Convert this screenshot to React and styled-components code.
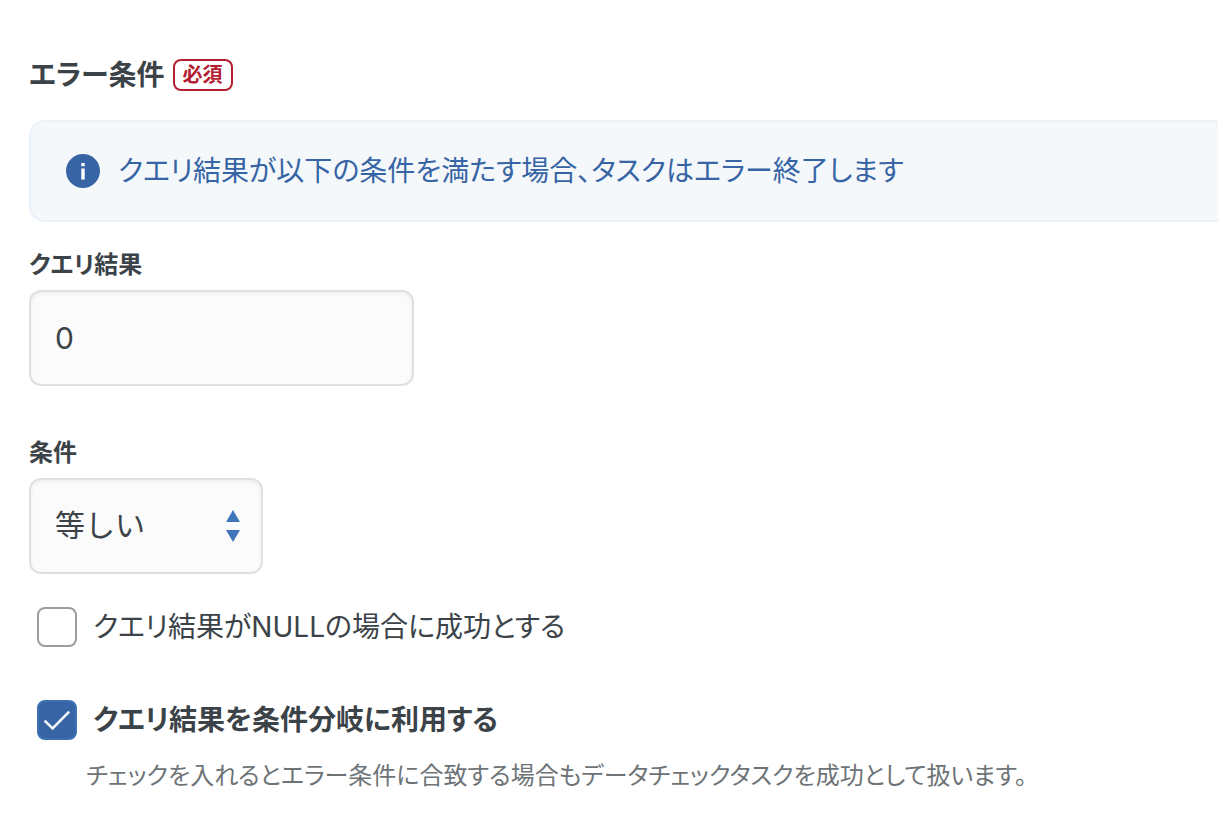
import React, { useState } from "react";
import styled, { createGlobalStyle } from "styled-components";

const GlobalStyle = createGlobalStyle`
  * {
    box-sizing: border-box;
  }
  body {
    margin: 0;
    background: #fff;
    color: #3b4348;
    font-family: Inter, "Noto Sans CJK JP", sans-serif;
    font-feature-settings: "palt";
  }
  input, select {
    font: inherit;
    color: inherit;
  }
`;

const Form = styled.form`
  padding: 57px 0 32px 29px;
`;

const Heading = styled.h2`
  display: flex;
  align-items: center;
  gap: 8px;
  margin: 0 0 27px;
  font-size: 28px;
  line-height: 36px;
`;

const Required = styled.span`
  height: 32px;
  padding: 0 8px;
  border: 2px solid #b4202f;
  border-radius: 8px;
  color: #b4202f;
  font-size: 20px;
  line-height: 28px;
`;

const Info = styled.div`
  display: flex;
  align-items: center;
  gap: 18px;
  height: 102px;
  margin-bottom: 25px;
  padding: 0 35px;
  border: 2px solid #ebf1f8;
  border-right: 0;
  border-radius: 16px 0 0 16px;
  background: #f4f8fb;
  color: #3664a4;
  font-size: 28px;
  line-height: 40px;
`;

const Field = styled.div`
  display: flex;
  flex-direction: column;
  align-items: flex-start;
  gap: 7px;
  margin-bottom: ${({ $gap }) => $gap};
`;

const Label = styled.label`
  font-size: 24px;
  font-weight: 700;
  line-height: 36px;
`;

const TextInput = styled.input`
  width: 385px;
  height: 96px;
  padding: 0 24px;
  border: 2px solid #e0e0e0;
  border-radius: 12px;
  background: #fbfbfb;
  box-shadow: inset 0 2px 4px #0000000d;
  font-size: 30px;
`;

const SelectBox = styled.div`
  position: relative;
  width: 234px;

  svg {
    position: absolute;
    top: 32px;
    right: 23px;
    pointer-events: none;
  }
`;

const Select = styled.select`
  width: 100%;
  height: 96px;
  padding: 0 24px 2px;
  border: 2px solid #e0e0e0;
  border-radius: 12px;
  background: #fbfbfb;
  box-shadow: inset 0 2px 4px #0000000d;
  font-size: 30px;
  font-feature-settings: normal;
  appearance: none;
`;

const CheckLabel = styled.label`
  display: flex;
  align-items: center;
  gap: 16px;
  margin-left: 8px;
  font-size: 28px;
  font-weight: ${({ $bold }) => ($bold ? 700 : 400)};
  line-height: 40px;
`;

const CheckBox = styled.span`
  display: grid;
  width: 40px;
  height: 40px;

  input, svg {
    grid-area: 1 / 1;
  }
  svg {
    pointer-events: none;
    visibility: hidden;
  }
  input:checked + svg {
    visibility: visible;
  }
`;

const CheckInput = styled.input`
  width: 40px;
  height: 40px;
  margin: 0;
  border: 2px solid #9a9ea1;
  border-radius: 8px;
  background: #fff;
  appearance: none;

  &:checked {
    border-color: #3e70b5;
    background: #3664a4;
  }
`;

const Options = styled.div`
  display: flex;
  flex-direction: column;
  gap: 53px;
`;

const Help = styled.p`
  margin: 18px 0 0 57px;
  color: #6d7376;
  font-size: 24px;
  line-height: 36px;
`;

const InfoIcon = () => (
  <svg width="34" height="34" viewBox="0 0 34 34" aria-hidden="true">
    <circle cx="17" cy="17" r="17" fill="#3664a4" />
    <path d="M15.3 9h3.4v3.2h-3.4zM15.3 14.6h3.4v11h-3.4z" fill="#fff" />
  </svg>
);

const Checkbox = ({ label, bold, checked, onChange }) => (
  <CheckLabel $bold={bold}>
    <CheckBox>
      <CheckInput type="checkbox" checked={checked} onChange={(e) => onChange(e.target.checked)} />
      <svg width="40" height="40" viewBox="0 0 40 40" aria-hidden="true">
        <path d="M7.6 20.6l8 7.8 16.6-16.8" fill="none" stroke="#f5f6f8" strokeWidth="2.6" />
      </svg>
    </CheckBox>
    {label}
  </CheckLabel>
);

const App = () => {
  const [result, setResult] = useState("0");
  const [condition, setCondition] = useState("eq");
  const [nullOk, setNullOk] = useState(false);
  const [branch, setBranch] = useState(true);

  return (
    <>
      <GlobalStyle />
      <Form>
        <Heading>
          エラー条件
          <Required>必須</Required>
        </Heading>
        <Info>
          <InfoIcon />
          クエリ結果が以下の条件を満たす場合、タスクはエラー終了します
        </Info>
        <Field $gap="49px">
          <Label htmlFor="result">クエリ結果</Label>
          <TextInput id="result" value={result} onChange={(e) => setResult(e.target.value)} />
        </Field>
        <Field $gap="33px">
          <Label htmlFor="condition">条件</Label>
          <SelectBox>
            <Select id="condition" value={condition} onChange={(e) => setCondition(e.target.value)}>
              <option value="eq">等しい</option>
            </Select>
            <svg width="14" height="32" viewBox="0 0 14 32" aria-hidden="true">
              <path d="M7 0l7 12H0zM7 32l7-12H0z" fill="#4175ba" />
            </svg>
          </SelectBox>
        </Field>
        <Options>
          <Checkbox label="クエリ結果がNULLの場合に成功とする" checked={nullOk} onChange={setNullOk} />
          <Checkbox label="クエリ結果を条件分岐に利用する" bold checked={branch} onChange={setBranch} />
        </Options>
        <Help>チェックを入れるとエラー条件に合致する場合もデータチェックタスクを成功として扱います。</Help>
      </Form>
    </>
  );
};

export default App;
